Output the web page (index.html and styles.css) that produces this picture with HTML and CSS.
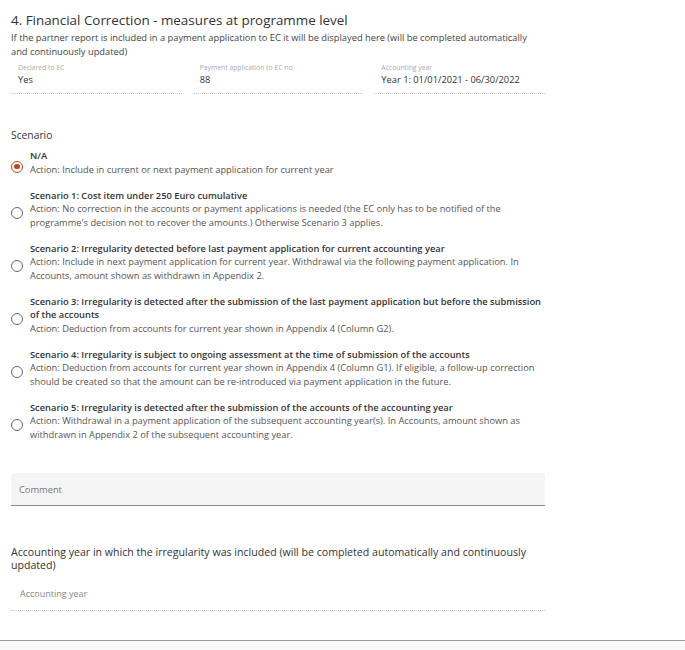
FILE: index.html
```html
<!DOCTYPE html>
<html lang="en">
<head>
  <meta charset="UTF-8">
  <meta name="viewport" content="width=device-width, initial-scale=1.0">
  <title>Financial Correction</title>
  <link rel="stylesheet" href="styles.css">
</head>
<body>
<div class="section">
  <h2 class="section-title">4. Financial Correction - measures at programme level</h2>
  <p class="section-hint">If the partner report is included in a payment application to EC it will be displayed here (will be completed automatically and continuously updated)</p>

  <div class="readonly-grid">
    <div class="readonly-field">
      <span class="field-label">Declared to EC</span>
      <span class="field-value">Yes</span>
    </div>
    <div class="readonly-field">
      <span class="field-label">Payment application to EC no</span>
      <span class="field-value">88</span>
    </div>
    <div class="readonly-field">
      <span class="field-label">Accounting year</span>
      <span class="field-value">Year 1: 01/01/2021 - 06/30/2022</span>
    </div>
  </div>

  <div class="scenario-label">Scenario</div>
  <div class="radio-group">
    <label class="radio-option">
      <span class="radio checked"></span>
      <span class="radio-text">
        <span class="option-title">N/A</span>
        <span class="option-action">Action: Include in current or next payment application for current year</span>
      </span>
    </label>
    <label class="radio-option">
      <span class="radio"></span>
      <span class="radio-text">
        <span class="option-title">Scenario 1: Cost item under 250 Euro cumulative</span>
        <span class="option-action">Action: No correction in the accounts or payment applications is needed (the EC only has to be notified of the programme's decision not to recover the amounts.) Otherwise Scenario 3 applies.</span>
      </span>
    </label>
    <label class="radio-option">
      <span class="radio"></span>
      <span class="radio-text">
        <span class="option-title">Scenario 2: Irregularity detected before last payment application for current accounting year</span>
        <span class="option-action">Action: Include in next payment application for current year. Withdrawal via the following payment application. In Accounts, amount shown as withdrawn in Appendix 2.</span>
      </span>
    </label>
    <label class="radio-option">
      <span class="radio"></span>
      <span class="radio-text">
        <span class="option-title">Scenario 3: Irregularity is detected after the submission of the last payment application but before the submission of the accounts</span>
        <span class="option-action">Action: Deduction from accounts for current year shown in Appendix 4 (Column G2).</span>
      </span>
    </label>
    <label class="radio-option">
      <span class="radio"></span>
      <span class="radio-text">
        <span class="option-title">Scenario 4: Irregularity is subject to ongoing assessment at the time of submission of the accounts</span>
        <span class="option-action">Action: Deduction from accounts for current year shown in Appendix 4 (Column G1). If eligible, a follow-up correction should be created so that the amount can be re-introduced via payment application in the future.</span>
      </span>
    </label>
    <label class="radio-option">
      <span class="radio"></span>
      <span class="radio-text">
        <span class="option-title">Scenario 5: Irregularity is detected after the submission of the accounts of the accounting year</span>
        <span class="option-action">Action: Withdrawal in a payment application of the subsequent accounting year(s). In Accounts, amount shown as withdrawn in Appendix 2 of the subsequent accounting year.</span>
      </span>
    </label>
  </div>

  <div class="comment-field">
    <span class="comment-placeholder">Comment</span>
  </div>

  <p class="year-title">Accounting year in which the irregularity was included (will be completed automatically and continuously updated)</p>
  <div class="readonly-field wide">
    <span class="field-placeholder">Accounting year</span>
  </div>
</div>
<div class="page-footer"></div>
</body>
</html>
```

FILE: styles.css
```css
body {
  margin: 0;
  font-family: "Open Sans", "Liberation Sans", sans-serif;
  color: #333;
  background-color: #fff;
}

.section {
  padding: 11px 0 0 11px;
  width: 534px;
}

.section-title {
  margin: 0;
  font-size: 13.4px;
  font-weight: 400;
  line-height: 18px;
  color: #333;
}

.section-hint {
  margin: 2px 0 0;
  font-size: 9.3px;
  line-height: 14px;
  color: #444;
}

/* read-only fields with dotted underline */
.readonly-grid {
  display: grid;
  grid-template-columns: repeat(3, 1fr);
  column-gap: 11px;
  margin-top: 4px;
}

.readonly-field {
  display: flex;
  flex-direction: column;
  padding: 0 0 6px 7px;
  border-bottom: 1px dotted #c8c8c8;
}

.field-label {
  font-size: 6.8px;
  line-height: 10px;
  color: #aaa;
}

.field-value {
  font-size: 9.3px;
  line-height: 14px;
  color: #333;
}

.scenario-label {
  margin-top: 34px;
  font-size: 10.3px;
  line-height: 14px;
  color: #333;
}

.radio-group {
  display: flex;
  flex-direction: column;
  gap: 12.5px;
  margin-top: 7px;
}

.radio-option {
  display: flex;
  align-items: center;
  gap: 7px;
  cursor: pointer;
}

.radio {
  flex: none;
  width: 12px;
  height: 12px;
  margin-top: 8px;
  border: 1.2px solid #666;
  border-radius: 50%;
  box-sizing: border-box;
  position: relative;
}

.radio.checked {
  border-color: #c0451c;
}

.radio.checked::after {
  content: "";
  position: absolute;
  left: 2px;
  top: 2px;
  width: 5.6px;
  height: 5.6px;
  border-radius: 50%;
  background-color: #c0451c;
}

.radio-text {
  display: flex;
  flex-direction: column;
  font-size: 9.3px;
  line-height: 13.5px;
}

.option-title {
  font-weight: 600;
  color: #333;
}

.option-action {
  color: #555;
}

.comment-field {
  margin-top: 32px;
  height: 32px;
  display: flex;
  align-items: center;
  padding-left: 8px;
  background-color: #f5f5f5;
  border-bottom: 1px solid #8a8a8a;
  border-radius: 3px 3px 0 0;
}

.comment-placeholder {
  font-size: 9.3px;
  color: #777;
}

.year-title {
  margin: 40px 0 0;
  font-size: 10.6px;
  line-height: 13px;
  color: #333;
}

.readonly-field.wide {
  margin-top: 16px;
  padding: 0 0 10px 9px;
}

.field-placeholder {
  font-size: 9px;
  line-height: 12px;
  color: #888;
}

.page-footer {
  margin-top: 29px;
  height: 20px;
  border-top: 1px solid #999;
  background-color: #f9f9f9;
}
```
